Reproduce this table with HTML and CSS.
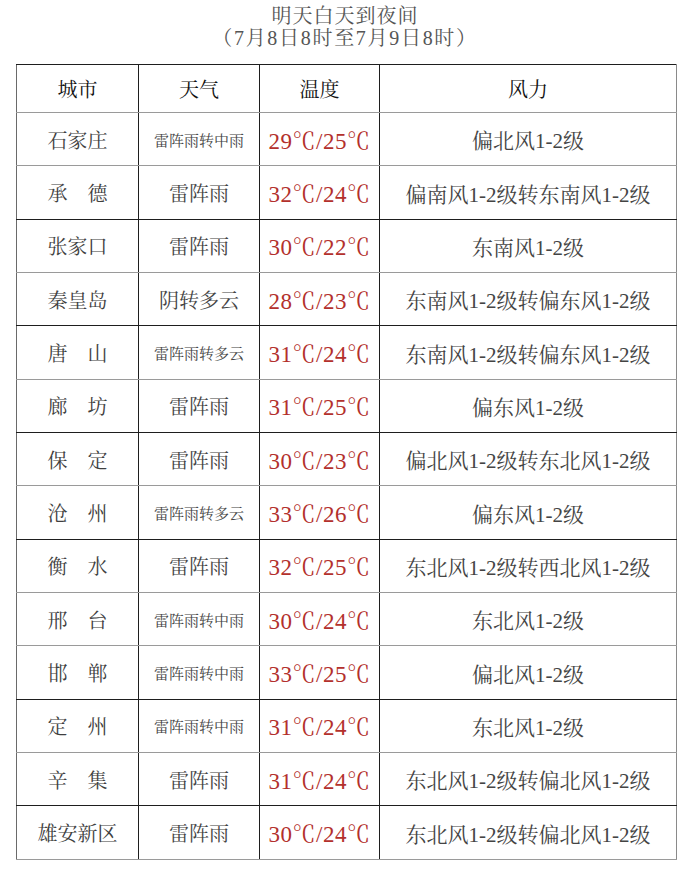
FILE: index.html
```html
<!DOCTYPE html>
<html lang="zh-CN">
<head>
<meta charset="utf-8">
<title>明天白天到夜间天气预报</title>
<link rel="stylesheet" href="styles.css">
</head>
<body>
<div class="page">
  <div class="title">
    <div class="title-line main">明天白天到夜间</div>
    <div class="title-line sub">（7月8日8时至7月9日8时）</div>
  </div>
  <table class="forecast">
    <thead>
      <tr class="head">
        <th class="c-city">城市</th>
        <th class="c-wx">天气</th>
        <th class="c-temp">温度</th>
        <th class="c-wind">风力</th>
      </tr>
    </thead>
    <tbody>
      <tr class="lt"><td class="city">石家庄</td><td class="wx sm">雷阵雨转中雨</td><td class="temp">29℃/25℃</td><td class="wind">偏北风1-2级</td></tr>
      <tr class="dk"><td class="city">承　德</td><td class="wx">雷阵雨</td><td class="temp">32℃/24℃</td><td class="wind">偏南风1-2级转东南风1-2级</td></tr>
      <tr class="lt"><td class="city">张家口</td><td class="wx">雷阵雨</td><td class="temp">30℃/22℃</td><td class="wind">东南风1-2级</td></tr>
      <tr class="dk"><td class="city">秦皇岛</td><td class="wx">阴转多云</td><td class="temp">28℃/23℃</td><td class="wind">东南风1-2级转偏东风1-2级</td></tr>
      <tr class="lt"><td class="city">唐　山</td><td class="wx sm">雷阵雨转多云</td><td class="temp">31℃/24℃</td><td class="wind">东南风1-2级转偏东风1-2级</td></tr>
      <tr class="dk"><td class="city">廊　坊</td><td class="wx">雷阵雨</td><td class="temp">31℃/25℃</td><td class="wind">偏东风1-2级</td></tr>
      <tr class="lt"><td class="city">保　定</td><td class="wx">雷阵雨</td><td class="temp">30℃/23℃</td><td class="wind">偏北风1-2级转东北风1-2级</td></tr>
      <tr class="dk"><td class="city">沧　州</td><td class="wx sm">雷阵雨转多云</td><td class="temp">33℃/26℃</td><td class="wind">偏东风1-2级</td></tr>
      <tr class="lt"><td class="city">衡　水</td><td class="wx">雷阵雨</td><td class="temp">32℃/25℃</td><td class="wind">东北风1-2级转西北风1-2级</td></tr>
      <tr class="lt"><td class="city">邢　台</td><td class="wx sm">雷阵雨转中雨</td><td class="temp">30℃/24℃</td><td class="wind">东北风1-2级</td></tr>
      <tr class="dk"><td class="city">邯　郸</td><td class="wx sm">雷阵雨转中雨</td><td class="temp">33℃/25℃</td><td class="wind">偏北风1-2级</td></tr>
      <tr class="lt"><td class="city">定　州</td><td class="wx sm">雷阵雨转中雨</td><td class="temp">31℃/24℃</td><td class="wind">东北风1-2级</td></tr>
      <tr class="dk"><td class="city">辛　集</td><td class="wx">雷阵雨</td><td class="temp">31℃/24℃</td><td class="wind">东北风1-2级转偏北风1-2级</td></tr>
      <tr class="last"><td class="city">雄安新区</td><td class="wx">雷阵雨</td><td class="temp">30℃/24℃</td><td class="wind">东北风1-2级转偏北风1-2级</td></tr>
    </tbody>
  </table>
</div>
</body>
</html>
```

FILE: styles.css
```css
html, body {
  margin: 0;
  padding: 0;
  background: #ffffff;
}

body {
  font-family: "Liberation Serif", "Noto Serif CJK SC", "Noto Sans CJK SC", serif;
  color: #444444;
}

.page {
  width: 690px;
  padding-top: 5px;
}

.title {
  text-align: center;
  color: #555555;
  font-size: 20px;
  line-height: 22px;
}

.title .main {
  letter-spacing: 1px;
}

.title .sub {
  letter-spacing: 1.7px;
}

.forecast {
  margin: 15px 0 0 16px;
  width: 661px;
  height: 796px;
  border-collapse: collapse;
  table-layout: fixed;
}

.c-city { width: 121px; }
.c-wx { width: 120px; }
.c-temp { width: 119px; }
.c-wind { width: auto; }

.forecast th,
.forecast td {
  border: 1px solid #9a9a9a;
  padding: 0;
  text-align: center;
  vertical-align: middle;
  white-space: nowrap;
  font-weight: normal;
}

.forecast th:not(:last-child),
.forecast td:not(:last-child) {
  border-right-color: #1e1e1e;
}

.forecast th:first-child,
.forecast td:first-child {
  border-left-color: #6a6a6a;
}

.forecast th:last-child,
.forecast td:last-child {
  border-right-color: #8a8a8a;
}

.head th {
  height: 47px;
  border-top-color: #1e1e1e;
  color: #111111;
  font-size: 20px;
}

.dk td {
  border-bottom-color: #1e1e1e;
}

.city {
  font-size: 20px;
  color: #3f3f3f;
}

.wx {
  font-size: 20px;
  color: #444444;
}

.wx.sm {
  font-size: 15px;
}

.temp {
  font-size: 23px;
  color: #b3302c;
  letter-spacing: 0.5px;
}

.wind {
  font-size: 21px;
  color: #444444;
}
```
